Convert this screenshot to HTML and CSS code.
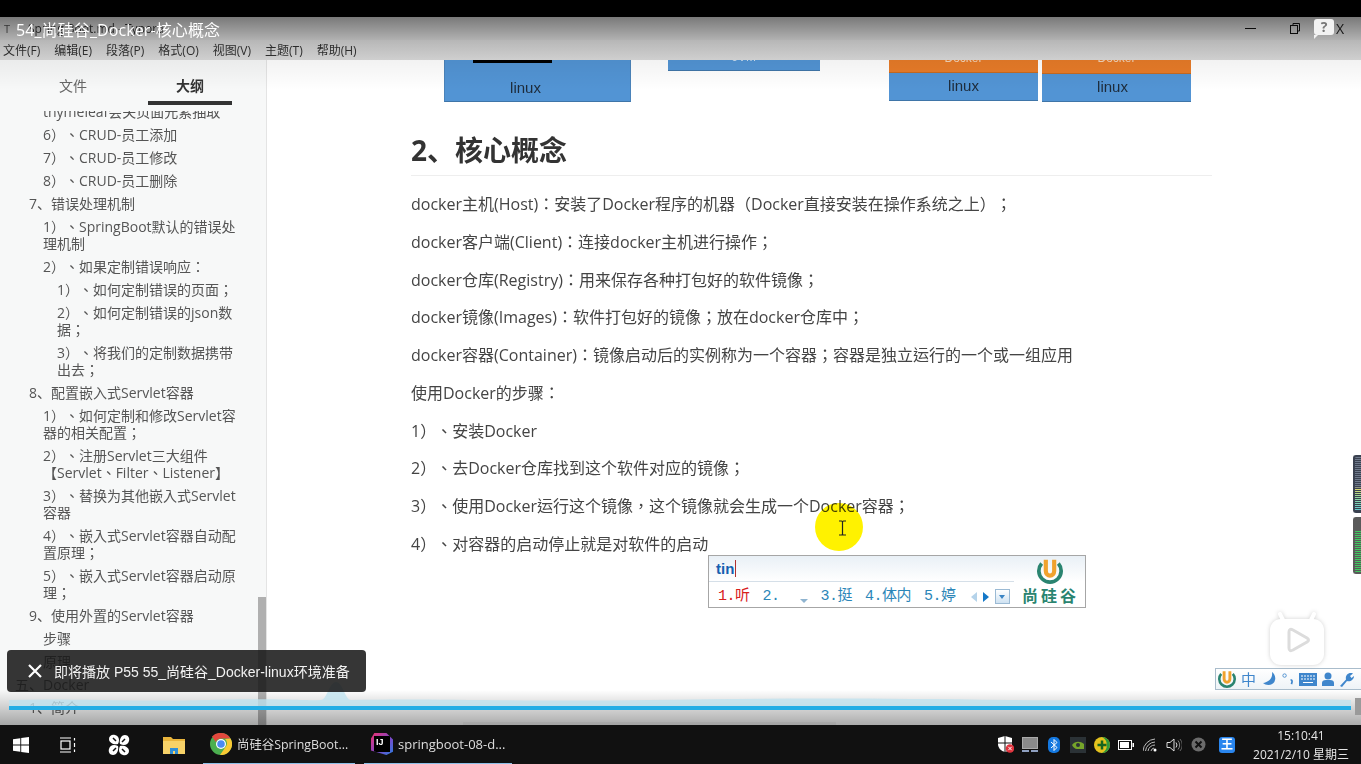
FILE: index.html
```html
<!DOCTYPE html>
<html>
<head>
  <meta charset="UTF-8">
  <title>54_尚硅谷_Docker-核心概念</title>
  <link rel="stylesheet" href="styles.css">
</head>
<body>
  <svg class="defs" width="0" height="0">
    <symbol id="u-logo" viewBox="0 0 28 28">
      <path d="M5 6 A12 12 0 1 0 23 6" fill="none" stroke="#2a8470" stroke-width="4"/>
      <path d="M9.500 2 V14 A4.500 5 0 0 0 18.500 14 V2" fill="none" stroke="#f0a22e" stroke-width="4.500"/>
    </symbol>
  </svg>

  <div class="letterbox"></div>

  <div class="window">
    <div class="titlebar">
      <span class="app-icon">T</span>
      <span class="file-name">Spring Boot.md - Typora</span>
      <div class="win-controls">
        <span class="win-min"></span>
        <svg class="win-max" width="10" height="11" viewBox="0 0 10 11" fill="none" stroke="#111"><path d="M3 2.500V.5H9.500V8H7.500"/><rect x=".5" y="2.500" width="7" height="8"/></svg>
        <span class="win-close">X</span>
      </div>
    </div>
    <div class="menubar">
      <span>文件(F)</span><span>编辑(E)</span><span>段落(P)</span><span>格式(O)</span><span>视图(V)</span><span>主题(T)</span><span>帮助(H)</span>
    </div>

    <div class="main">
      <aside class="sidebar">
        <div class="tabs">
          <div class="tab">文件</div>
          <div class="tab active">大纲</div>
        </div>
        <div class="outline">
          <div class="outline-inner">
            <div class="item l2">thymeleaf会关页面元素抽取</div>
            <div class="item l2">6）、CRUD-员工添加</div>
            <div class="item l2">7）、CRUD-员工修改</div>
            <div class="item l2">8）、CRUD-员工删除</div>
            <div class="item l1">7、错误处理机制</div>
            <div class="item l2">1）、SpringBoot默认的错误处理机制</div>
            <div class="item l2">2）、如果定制错误响应：</div>
            <div class="item l3">1）、如何定制错误的页面；</div>
            <div class="item l3">2）、如何定制错误的json数据；</div>
            <div class="item l3">3）、将我们的定制数据携带出去；</div>
            <div class="item l1">8、配置嵌入式Servlet容器</div>
            <div class="item l2">1）、如何定制和修改Servlet容器的相关配置；</div>
            <div class="item l2">2）、注册Servlet三大组件【Servlet、Filter、Listener】</div>
            <div class="item l2">3）、替换为其他嵌入式Servlet容器</div>
            <div class="item l2">4）、嵌入式Servlet容器自动配置原理；</div>
            <div class="item l2">5）、嵌入式Servlet容器启动原理；</div>
            <div class="item l1">9、使用外置的Servlet容器</div>
            <div class="item l2">步骤</div>
            <div class="item l2">原理</div>
            <div class="item l0">五、Docker</div>
            <div class="item l1">1、简介</div>
          </div>
          <div class="side-scroll"></div>
        </div>
      </aside>

      <section class="doc">
        <div class="figure-row">
          <div class="fig fig-a">
            <div class="fig-bar"></div>
            <div class="fig-linux">linux</div>
          </div>
          <div class="fig fig-b">JVM</div>
          <div class="fig fig-c">
            <div class="fig-docker">Docker</div>
            <div class="fig-linux">linux</div>
          </div>
          <div class="fig fig-d">
            <div class="fig-docker">Docker</div>
            <div class="fig-linux">linux</div>
          </div>
        </div>

        <h2>2、核心概念</h2>
        <p>docker主机(Host)：安装了Docker程序的机器（Docker直接安装在操作系统之上）；</p>
        <p>docker客户端(Client)：连接docker主机进行操作；</p>
        <p>docker仓库(Registry)：用来保存各种打包好的软件镜像；</p>
        <p>docker镜像(Images)：软件打包好的镜像；放在docker仓库中；</p>
        <p>docker容器(Container)：镜像启动后的实例称为一个容器；容器是独立运行的一个或一组应用</p>
        <p>使用Docker的步骤：</p>
        <p>1）、安装Docker</p>
        <p>2）、去Docker仓库找到这个软件对应的镜像；</p>
        <p>3）、使用Docker运行这个镜像，这个镜像就会生成一个Docker容器；</p>
        <p>4）、对容器的启动停止就是对软件的启动</p>
        <div class="doc-hscroll"></div>
      </section>
    </div>
  </div>

  <footer class="taskbar">
    <div class="task-slot slot-win">
      <svg width="16" height="16" viewBox="0 0 16 16"><path d="M0 2.200 7.300 1.200V7.500H0ZM8.200 1 16 0V7.500H8.200ZM0 8.500H7.300V14.800L0 13.800ZM8.200 8.500H16V16L8.200 15Z" fill="#fff"/></svg>
    </div>
    <div class="task-slot slot-view">
      <svg width="16" height="16" viewBox="0 0 16 16" fill="none" stroke="#fff" stroke-width="1.200"><path d="M0 1H11M0 15H11"/><rect x="1" y="4" width="9" height="8"/><path d="M14.500 1V3.500M14.500 6V10M14.500 12.500V15"/></svg>
    </div>
    <div class="task-slot slot-fan">
      <svg width="22" height="22" viewBox="0 0 22 22" fill="#fff"><path d="M10 10C6 11 1 9 1 5 1 2 4 0 7 1 11 2 12 6 10 10ZM12 10C11 6 13 1 17 1 20 1 22 4 21 7 20 11 16 12 12 10ZM12 12C16 11 21 13 21 17 21 20 18 22 15 21 11 20 10 16 12 12ZM10 12C11 16 9 21 5 21 2 21 0 18 1 15 2 11 6 10 10 12Z"/><path d="M5 4 8 7M17 5 14 8M17 18 14 15M5 17 8 14" stroke="#111" stroke-width="1.500"/></svg>
    </div>
    <div class="task-slot slot-folder">
      <svg width="22" height="18" viewBox="0 0 22 18"><path d="M0 1H8L10 3H22V18H0Z" fill="#e9b53c"/><rect x="0" y="5" width="22" height="13" fill="#f7d268"/><path d="M7 18V12H15V18H12V15H10V18Z" fill="#2f8fd8"/></svg>
    </div>
    <div class="task-app app-chrome">
      <svg width="22" height="22" viewBox="0 0 22 22"><circle cx="11" cy="11" r="11" fill="#4caf50"/><path d="M11 0A11 11 0 0 1 20.500 5.500L11 5.500A5.500 5.500 0 0 0 5.800 9L2 3.500A11 11 0 0 1 11 0Z" fill="#e2483d"/><path d="M20.500 5.500A11 11 0 0 1 10 22L15.500 14A5.500 5.500 0 0 0 15 6Z" fill="#f9c934"/><circle cx="11" cy="11" r="5" fill="#fff"/><circle cx="11" cy="11" r="3.800" fill="#4a8af4"/></svg>
      <span class="app-label">尚硅谷SpringBoot...</span>
    </div>
    <div class="task-app app-idea">
      <span class="ij-icon"><span class="ij-face">IJ</span></span>
      <span>springboot-08-d...</span>
    </div>

    <div class="tray">
      <span class="tray-slot">
        <svg width="16" height="17" viewBox="0 0 16 17"><path d="M7 0 14 2V8C14 12 11 15 7 16 3 15 0 12 0 8V2Z" fill="#fff"/><path d="M7 0V16M0 7H14" stroke="#111" stroke-width="1"/><circle cx="12" cy="12.500" r="4.300" fill="#e0323c"/><path d="M10.300 10.800 13.700 14.200M13.700 10.800 10.300 14.200" stroke="#fff"/></svg>
      </span>
      <span class="tray-slot">
        <svg width="16" height="16" viewBox="0 0 16 16"><rect x="0.500" y="0.500" width="15" height="11" fill="#8a8a8a" stroke="#aaa"/><rect x="0" y="13" width="7" height="2" fill="#8fa0c0"/><rect x="9" y="13" width="7" height="2" fill="#8fa0c0"/></svg>
      </span>
      <span class="tray-slot">
        <svg width="12" height="16" viewBox="0 0 12 16"><rect width="12" height="16" rx="5" fill="#1478e0"/><path d="M3 5 9 10.500 6 13.500V2.500L9 5.500 3 11" fill="none" stroke="#fff"/></svg>
      </span>
      <span class="tray-slot">
        <svg width="16" height="16" viewBox="0 0 16 16"><rect width="16" height="16" fill="#2b3236"/><path d="M2 8C5 4 10 4 14 7V12H7C5 12 3 10 2 8Z" fill="#76a52a"/><circle cx="8" cy="8" r="2" fill="#2b3236"/></svg>
      </span>
      <span class="tray-slot">
        <svg width="16" height="16" viewBox="0 0 16 16"><circle cx="8" cy="8" r="8" fill="#e4c21e"/><path d="M8 0A8 8 0 0 1 8 16 9 9 0 0 0 8 0Z" fill="#2f9a3c"/><path d="M8 3.500V12.500M3.500 8H12.500" stroke="#17651f" stroke-width="2.500"/></svg>
      </span>
      <span class="tray-slot">
        <svg width="16" height="10" viewBox="0 0 16 10"><rect x="0.500" y="0.500" width="13" height="9" fill="none" stroke="#fff"/><rect x="2" y="2" width="9" height="6" fill="#fff"/><rect x="14.500" y="3" width="1.500" height="4" fill="#fff"/></svg>
      </span>
      <span class="tray-slot">
        <svg width="14" height="14" viewBox="0 0 14 14" fill="none" stroke="#bbb"><path d="M0 13A13 13 0 0 1 12 1M2.500 13A10 10 0 0 1 12 4M5 13A7 7 0 0 1 12 7M8 13A4 4 0 0 1 11 10"/><circle cx="12" cy="12" r="1.500" fill="#fff" stroke="none"/></svg>
      </span>
      <span class="tray-slot">
        <svg width="16" height="14" viewBox="0 0 16 14" fill="none" stroke="#ddd"><path d="M1 4.500H4L8 1V13L4 9.500H1Z"/><path d="M10 4.500A4 4 0 0 1 10 9.500" /><path d="M12 2.500A7 7 0 0 1 12 11.500" stroke="#888"/><path d="M14 1A9 9 0 0 1 14 13" stroke="#666"/></svg>
      </span>
      <span class="tray-slot">
        <svg width="15" height="15" viewBox="0 0 15 15"><circle cx="7.500" cy="7.500" r="7" fill="#6b6b6b"/><path d="M4.500 4.500 10.500 10.500M10.500 4.500 4.500 10.500" stroke="#111" stroke-width="2"/></svg>
      </span>
      <span class="tray-blue">王</span>
      <div class="clock">
        <div>15:10:41</div>
        <div>2021/2/10 星期三</div>
      </div>
    </div>
  </footer>

  <div class="shade-top"></div>
  <div class="shade-bottom"></div>
  <div class="video-title">54_尚硅谷_Docker-核心概念</div>
  <div class="help-bubble">?</div>

  <div class="cursor-spot"></div>
  <svg class="ibeam" width="9" height="16" viewBox="0 0 9 16" fill="none" stroke="#222" stroke-width="1.200"><path d="M1 1H3.500Q4.500 1 4.500 2V14Q4.500 15 3.500 15H1M8 1H5.500Q4.500 1 4.500 2M4.500 14Q4.500 15 5.500 15H8"/></svg>

  <div class="ime">
    <div class="ime-left">
      <div class="ime-input"><b>tin</b><i class="caret"></i></div>
      <div class="ime-list">
        <span class="cand first">1.听</span>
        <span class="cand">2.</span>
        <span class="cand-mark"></span>
        <span class="cand">3.挺</span>
        <span class="cand">4.体内</span>
        <span class="cand">5.婷</span>
        <span class="arrow arrow-l"></span>
        <span class="arrow arrow-r"></span>
        <span class="ime-more"></span>
      </div>
    </div>
    <div class="ime-brand">
      <svg width="26" height="26"><use href="#u-logo"/></svg>
      <span class="brand-name">尚硅谷</span>
    </div>
  </div>

  <div class="ime-bar">
    <svg width="18" height="18"><use href="#u-logo"/></svg>
    <span class="ime-zh">中</span>
    <svg width="16" height="16" viewBox="0 0 16 16"><path d="M11 1C12 7 8 11 2 12 5 15 13 15 14 9 15 6 13 2 11 1Z" fill="#3f86cc"/></svg>
    <svg width="12" height="16" viewBox="0 0 14 16"><circle cx="3" cy="4" r="2" fill="none" stroke="#3f86cc"/><path d="M10 9Q13 9 11 14" fill="none" stroke="#3f86cc" stroke-width="2"/></svg>
    <svg width="18" height="13" viewBox="0 0 18 13"><rect width="18" height="13" fill="#3f86cc"/><path d="M2 3H16M2 6H16" stroke="#fff" stroke-dasharray="2 1"/><path d="M4 9.500H14" stroke="#fff"/></svg>
    <svg width="12" height="14" viewBox="0 0 12 14" fill="#3f86cc"><circle cx="6" cy="4" r="3.500"/><path d="M0 14V11Q0 8 4 8H8Q12 8 12 11V14Z"/></svg>
    <svg width="15" height="15" viewBox="0 0 15 15"><path d="M1 14 7 7.500C6 3 10 0 14 1.500L11 4 12.500 6 15 4C15 8 11 10 8 9L3 15Z" fill="#3f86cc"/></svg>
  </div>

  <div class="meter meter-a"></div>
  <div class="meter meter-b"></div>

  <div class="tv-btn">
    <svg width="56" height="54" viewBox="0 0 56 54">
      <path d="M15 10 11 2M41 10 45 2" stroke="#fff" stroke-width="4" stroke-linecap="round"/>
      <rect x="1" y="7" width="54" height="46" rx="11" fill="#fff"/>
      <path d="M20 20Q20 16 24 18L38 26Q41 28 38 30L24 38Q20 40 20 36Z" fill="none" stroke="#dcdcdc" stroke-width="3"/>
    </svg>
  </div>

  <svg class="wave" width="1342" height="26" viewBox="0 0 1342 26" preserveAspectRatio="none">
    <path d="M0 20C60 18 120 22 200 20S290 21 312 20C318 20 320 2 327 2S336 20 342 20C420 18 520 22 640 20S860 18 1000 20 1240 17 1342 20V26H0Z" fill="#bfe2ef" fill-opacity=".8"/>
  </svg>

  <div class="toast">
    <svg width="14" height="14" viewBox="0 0 14 14"><path d="M1 1 13 13M13 1 1 13" stroke="#fff" stroke-width="2.200"/></svg>
    <span>即将播放 P55 55_尚硅谷_Docker-linux环境准备</span>
  </div>

  <div class="progress"></div>
  <div class="progress-end"></div>
</body>
</html>
```

FILE: styles.css
```css
* {
  box-sizing: border-box;
}
html, body {
  margin: 0;
  height: 100%;
}
body {
  position: relative;
  width: 1361px;
  height: 764px;
  overflow: hidden;
  display: flex;
  flex-direction: column;
  background: #000;
  font-family: "Open Sans", "Noto Sans CJK TC", sans-serif;
  text-spacing-trim: space-all;
  color: #333;
}
.defs {
  position: absolute;
}
.letterbox {
  height: 17px;
  background: #000;
  flex: none;
}

/* app window */
.window {
  height: 708px;
  flex: none;
  display: flex;
  flex-direction: column;
  background: #fff;
}
.titlebar {
  height: 23px;
  flex: none;
  display: flex;
  align-items: center;
  padding-left: 4px;
  background: #e4e4e4;
  font-size: 12px;
  color: #333;
}
.app-icon {
  width: 12px;
  color: #555;
  font-size: 11px;
}
.file-name {
  margin-left: 12px;
}
.win-controls {
  margin-left: auto;
  display: flex;
  align-items: center;
  padding-right: 17px;
}
.win-min {
  width: 11px;
  height: 1px;
  background: #111;
}
.win-max {
  margin-left: 34px;
}
.win-close {
  margin-left: 36px;
  font-size: 14px;
  color: #222;
}
.menubar {
  height: 20px;
  flex: none;
  display: flex;
  align-items: center;
  gap: 14px;
  padding-left: 3px;
  background: linear-gradient(#eaeaea, #dadada);
  font-size: 12px;
  color: #333;
}
.main {
  flex: 1;
  min-height: 0;
  display: flex;
  overflow: hidden;
}

/* outline */
.sidebar {
  width: 267px;
  flex: none;
  display: flex;
  flex-direction: column;
  background: #f7f8f8;
  border-right: 1px solid #e4e4e4;
}
.tabs {
  display: flex;
  gap: 33px;
  padding-left: 31px;
  flex: none;
  height: 45px;
  position: relative;
}
.tab {
  width: 84px;
  padding-top: 17px;
  line-height: 17px;
  font-size: 14px;
  text-align: center;
  color: #666;
}
.tab.active {
  color: #333;
  font-weight: 700;
  border-bottom: 4px solid #333;
}
.outline {
  flex: 1;
  min-height: 0;
  margin-top: 6px;
  overflow: hidden;
  position: relative;
}
.outline-inner {
  margin-top: -11px;
  padding-right: 30px;
}
.item {
  padding: 3px 0;
  font-size: 14px;
  line-height: 17px;
  color: #555;
}
.l0 {
  padding-left: 15px;
  font-family: "Open Sans", "Noto Sans CJK SC", sans-serif;
}
.l1 {
  padding-left: 29px;
  font-family: "Open Sans", "Noto Sans CJK SC", sans-serif;
}
.l2 {
  padding-left: 43px;
}
.l3 {
  padding-left: 57px;
}
.side-scroll {
  position: absolute;
  right: 0;
  bottom: 0;
  width: 8px;
  height: 128px;
  background: #b0b0b0;
}

/* document */
.doc {
  flex: 1;
  padding-left: 144px;
  width: 0;
  position: relative;
}
.figure-row {
  display: flex;
  align-items: flex-start;
  padding-left: 33px;
  margin-top: -30px;
  color: #1d2b3a;
  font-family: "Liberation Sans", sans-serif;
  font-size: 15px;
}
.fig {
  flex: none;
  text-align: center;
}
.fig-a {
  width: 187px;
  height: 72px;
  background: #5294d4;
  border-bottom: 1px solid #3f75a8;
  border-left: 1px solid #4a83ba;
  border-right: 1px solid #4a83ba;
}
.fig-bar {
  width: 79px;
  height: 33px;
  margin-left: 28px;
  background: #000;
}
.fig-a .fig-linux {
  height: 38px;
  line-height: 49px;
  padding-right: 24px;
  background: none;
  border: 0;
}
.fig-b {
  width: 152px;
  height: 41px;
  margin-left: 37px;
  background: #5294d4;
  border-bottom: 1px solid #3f75a8;
  padding-top: 18px;
  line-height: 18px;
  font-size: 12px;
  color: #cfe2f3;
}
.fig-c {
  width: 149px;
  margin-left: 69px;
}
.fig-d {
  width: 149px;
  margin-left: 4px;
}
.fig-docker {
  background: #e77b28;
  color: #f3d4b8;
  font-size: 12px;
  padding-top: 20px;
  height: 43px;
  line-height: 16px;
  border-bottom: 1px solid #c56a22;
}
.fig-d .fig-docker {
  height: 44px;
}
.fig-linux {
  height: 28px;
  line-height: 26px;
  background: #5294d4;
  border-bottom: 1px solid #3f75a8;
}
.fig-d .fig-linux {
  padding-right: 8px;
}
h2 {
  width: 801px;
  margin: 31px 0 16px;
  padding-bottom: 8px;
  font-family: "Open Sans", "Noto Sans CJK SC", sans-serif;
  font-size: 28px;
  line-height: 34px;
  font-weight: 700;
  color: #333;
  border-bottom: 1px solid #eee;
}
p {
  margin: 0 0 12.200px;
  width: 801px;
  font-size: 16px;
  line-height: 25.600px;
  color: #444;
}
.doc-hscroll {
  position: absolute;
  left: 196px;
  bottom: 0;
  width: 373px;
  height: 3px;
  background: #f4f4f4;
}

/* taskbar */
.taskbar {
  height: 39px;
  flex: none;
  display: flex;
  align-items: center;
  background: #111;
  color: #ddd;
  font-size: 13px;
}
.task-slot {
  height: 39px;
  flex: none;
  display: flex;
  align-items: center;
  justify-content: center;
}
.slot-win {
  width: 42px;
}
.slot-view {
  width: 52px;
}
.slot-fan {
  width: 50px;
}
.slot-folder {
  width: 59px;
}
.task-app {
  height: 39px;
  flex: none;
  display: flex;
  align-items: center;
  gap: 5px;
  padding-left: 7px;
  white-space: nowrap;
  border-bottom: 1px solid #8cc0e8;
}
.app-chrome {
  width: 152px;
}
.app-label {
  font-size: 12.400px;
}
.app-idea {
  width: 148px;
  margin-left: 9px;
}
.ij-icon {
  width: 22px;
  height: 22px;
  padding: 3px;
  flex: none;
  background: linear-gradient(135deg, #f0326e, #8046c8 55%, #2a7ee0);
  clip-path: polygon(15% 0, 70% 0, 100% 30%, 100% 85%, 70% 100%, 0 80%, 0 25%);
}
.ij-face {
  display: block;
  width: 16px;
  height: 16px;
  background: #000;
  color: #fff;
  font-size: 9px;
  font-weight: 700;
  line-height: 12px;
  padding-left: 2px;
  font-family: "Liberation Sans", sans-serif;
}
.tray {
  margin-left: auto;
  display: flex;
  align-items: center;
  padding-right: 11px;
}
.tray-slot {
  width: 24px;
  height: 39px;
  display: flex;
  align-items: center;
  justify-content: center;
}
.tray-blue {
  width: 16px;
  height: 16px;
  margin: 0 17px 0 9px;
  border-radius: 3px;
  background: #2a86ee;
  color: #fff;
  font-size: 12px;
  line-height: 16px;
  font-weight: 700;
  text-align: center;
}
.clock {
  width: 98px;
  text-align: center;
  font-size: 12px;
  line-height: 19px;
  color: #e6e6e6;
  white-space: nowrap;
}

/* video player layer */
.shade-top {
  position: absolute;
  left: 0;
  right: 0;
  top: 17px;
  height: 73px;
  background: linear-gradient(rgba(0, 0, 0, .47), rgba(0, 0, 0, .22) 32%, rgba(0, 0, 0, .05) 59%, rgba(0, 0, 0, 0));
}
.shade-bottom {
  position: absolute;
  left: 0;
  right: 0;
  top: 690px;
  height: 35px;
  background: linear-gradient(rgba(0, 0, 0, 0), rgba(0, 0, 0, .33));
}
.video-title {
  position: absolute;
  left: 16px;
  top: 19px;
  font-family: "Open Sans", "Noto Sans CJK SC", sans-serif;
  font-size: 16px;
  line-height: 22px;
  letter-spacing: .1px;
  color: #fff;
  white-space: nowrap;
}
.help-bubble {
  position: absolute;
  left: 1314px;
  top: 19px;
  width: 20px;
  height: 16px;
  border-radius: 3px;
  background: #f2f2f2;
  color: #777;
  font-size: 14px;
  font-weight: 700;
  line-height: 16px;
  text-align: center;
}
.help-bubble::after {
  content: "";
  position: absolute;
  left: 0;
  top: 16px;
  border-top: 4px solid #f2f2f2;
  border-right: 4px solid transparent;
}
.cursor-spot {
  position: absolute;
  left: 815px;
  top: 503px;
  width: 48px;
  height: 48px;
  border-radius: 50%;
  background: #fff200;
  mix-blend-mode: multiply;
}
.ibeam {
  position: absolute;
  left: 838px;
  top: 520px;
}

/* ime candidates */
.ime {
  position: absolute;
  left: 708px;
  top: 555px;
  width: 378px;
  height: 53px;
  display: flex;
  background: linear-gradient(#e9f0f6, #fff 50%);
  border: 1px solid #a6a6a6;
}
.ime-left {
  width: 305px;
  flex: none;
}
.ime-input {
  height: 26px;
  padding-left: 7px;
  display: flex;
  align-items: center;
  border-bottom: 1px solid #d5dfe8;
  font-family: "Liberation Sans", sans-serif;
  font-size: 15px;
  color: #1560b0;
}
.caret {
  width: 1px;
  height: 17px;
  margin-left: 1px;
  background: #b03030;
}
.ime-list {
  display: flex;
  align-items: center;
  height: 25px;
  padding: 4px 0 0 9px;
  font-family: "Liberation Mono", "Noto Sans CJK SC", monospace;
  font-size: 15px;
  line-height: 20px;
  letter-spacing: -.5px;
  color: #2b86b8;
  white-space: nowrap;
}
.cand {
  margin-right: 13px;
}
.first {
  color: #d8201c;
}
.cand-mark {
  width: 0;
  height: 0;
  margin: 9px 13px 0 7px;
  border: 4px solid transparent;
  border-top: 4px solid #8fb4d0;
  border-bottom: 0;
}
.arrow {
  width: 0;
  height: 0;
  border-top: 5px solid transparent;
  border-bottom: 5px solid transparent;
}
.arrow-l {
  margin-left: 2px;
  border-right: 6px solid #b5d3ea;
}
.arrow-r {
  margin-left: 6px;
  border-left: 6px solid #1478c8;
}
.ime-more {
  width: 15px;
  height: 15px;
  margin-left: 6px;
  border: 1px solid #9bbad4;
  background: linear-gradient(#fff, #cfe2f2);
  position: relative;
}
.ime-more::after {
  content: "";
  position: absolute;
  left: 3px;
  top: 5px;
  border: 3.500px solid transparent;
  border-top: 4px solid #3a84c4;
  border-bottom: 0;
}
.ime-brand {
  flex: 1;
  display: flex;
  flex-direction: column;
  align-items: center;
  padding-top: 2px;
  color: #2a8470;
}
.brand-name {
  margin: 2px 0 0 2px;
  font-family: "Noto Sans CJK SC", sans-serif;
  font-size: 16px;
  line-height: 18px;
  font-weight: 700;
  letter-spacing: 3px;
}
.ime-bar {
  position: absolute;
  left: 1215px;
  top: 668px;
  width: 146px;
  height: 22px;
  display: flex;
  align-items: center;
  gap: 5px;
  padding-left: 2px;
  background: linear-gradient(#fff, #eef3f7);
  border: 1px solid #a9bccb;
  border-right: 0;
}
.ime-zh {
  font-family: "Noto Sans CJK SC", sans-serif;
  font-size: 15px;
  line-height: 20px;
  color: #3f86cc;
}
.meter {
  position: absolute;
  left: 1353px;
  width: 8px;
  border-radius: 3px 0 0 3px;
}
.meter-a {
  top: 455px;
  height: 58px;
  background:
    repeating-linear-gradient(rgba(58, 65, 80, 0) 0 1px, #3a4150 1px 2px),
    linear-gradient(#6f7a8c 55%, #d8d870 60%, #8fd8a0 75%, #60c8d0);
  border: 2px solid #3a4150;
  border-right: 0;
}
.meter-b {
  top: 517px;
  height: 57px;
  background:
    repeating-linear-gradient(rgba(90, 90, 90, 0) 0 1px, #5a5a5a 1px 2px),
    linear-gradient(#5a5a5a 22%, #40c860 22%);
  border: 2px solid #5a5a5a;
  border-right: 0;
}
.tv-btn {
  position: absolute;
  left: 1269px;
  top: 612px;
  line-height: 0;
  filter: drop-shadow(0 0 2px rgba(0, 0, 0, .18));
}

/* next up toast */
.toast {
  position: absolute;
  left: 7px;
  top: 650px;
  width: 359px;
  height: 42px;
  display: flex;
  align-items: center;
  gap: 12px;
  padding-left: 21px;
  border-radius: 4px;
  background: rgba(24, 24, 24, .87);
  font-family: "Liberation Sans", "Noto Sans CJK SC", sans-serif;
  font-size: 14px;
  color: #f2f2f2;
  white-space: nowrap;
}
.wave {
  position: absolute;
  left: 9px;
  top: 680px;
}
.progress {
  position: absolute;
  left: 9px;
  top: 706px;
  width: 1342px;
  height: 4px;
  background: #23ade5;
}
.progress-end {
  position: absolute;
  left: 1355px;
  top: 698px;
  width: 6px;
  height: 17px;
  background: #9a9a9a;
}
```
